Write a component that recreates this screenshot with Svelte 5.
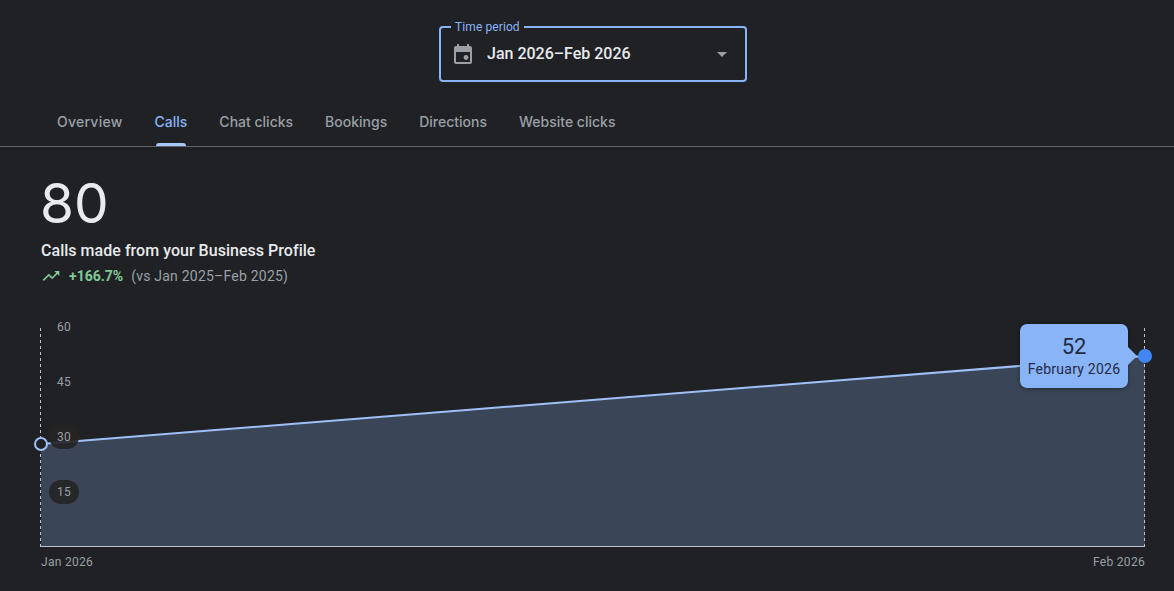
<script>
  const tabs = ['Overview', 'Calls', 'Chat clicks', 'Bookings', 'Directions', 'Website clicks'];
  const active = 'Calls';
  const ticks = [
    { label: '60', y: 327 },
    { label: '45', y: 382 },
    { label: '30', y: 437 },
    { label: '15', y: 492 }
  ];
  // chart canvas starts at y=320 of the page
  const top = 320;
</script>

<div class="page">
  <div class="period">
    <div class="field">
      <span class="legend">Time period</span>
      <svg class="cal" viewBox="0 0 24 24" width="24" height="24">
        <path fill="#9aa0a6" fill-rule="evenodd" d="M19 4h-1V2h-2v2H8V2H6v2H5c-1.1 0-2 .9-2 2v14c0 1.1.9 2 2 2h14c1.1 0 2-.9 2-2V6c0-1.1-.9-2-2-2zM5 10h14v10H5z" />
        <circle cx="15" cy="15.5" r="2.4" fill="#9aa0a6" />
      </svg>
      <span class="value">Jan 2026–Feb 2026</span>
      <span class="caret"></span>
    </div>
  </div>

  <nav class="tabs">
    {#each tabs as tab}
      <div class="tab" class:active={tab === active}>{tab}</div>
    {/each}
  </nav>

  <section class="summary">
    <div class="total">80</div>
    <div class="caption">Calls made from your Business Profile</div>
    <div class="delta">
      <svg viewBox="0 0 24 24" width="20" height="20">
        <path fill="#81c995" d="M16 6l2.29 2.29-4.88 4.88-4-4L2 16.59 3.41 18l6-6 4 4 6.3-6.29L22 12V6z" />
      </svg>
      <span class="pct">+166.7%</span>
      <span class="vs">(vs Jan 2025–Feb 2025)</span>
    </div>
  </section>

  <div class="chart">
    <svg width="1174" height="271" viewBox="0 {top} 1174 271">
      <polygon class="area" points="41,444 1145,356 1145,546 41,546" />
      <line class="line" x1="41" y1="444" x2="1145" y2="356" />
      <line class="guide" x1="40.5" y1="328" x2="40.5" y2="546" />
      <line class="guide" x1="1144.5" y1="328" x2="1144.5" y2="546" />
      <line class="base" x1="40" y1="546.5" x2="1145" y2="546.5" />
      <rect class="pill" x="49" y="425" width="30" height="24" rx="12" />
      <rect class="pill" x="49" y="480" width="30" height="24" rx="12" />
      {#each ticks as t}
        <text class="tick" x="64" y={t.y + 4} text-anchor="middle">{t.label}</text>
      {/each}
      <circle class="start" cx="41" cy="444" r="6" />
      <circle class="end" cx="1145" cy="356" r="7" />
      <text class="axis" x="41" y="566">Jan 2026</text>
      <text class="axis" x="1145" y="566" text-anchor="end">Feb 2026</text>
    </svg>
    <div class="tip">
      <div class="tip-num">52</div>
      <div class="tip-label">February 2026</div>
    </div>
  </div>
</div>

<style>
  :global(body) {
    margin: 0;
    background: #1f2125;
  }

  .page {
    width: 1174px;
    height: 591px;
    overflow: hidden;
    font-family: Roboto, "Liberation Sans", sans-serif;
    color: #e8eaed;
    background: #1f2125;
  }

  .period {
    display: flex;
    justify-content: center;
    padding-top: 26px;
    padding-left: 12px;
  }

  .field {
    position: relative;
    box-sizing: border-box;
    width: 308px;
    height: 56px;
    display: flex;
    align-items: center;
    padding: 0 18px 0 10px;
    border: 2px solid #8ab4f8;
    border-radius: 4px;
  }

  .legend {
    position: absolute;
    top: -9px;
    left: 10px;
    padding: 0 4px;
    background: #1f2125;
    font-size: 12px;
    line-height: 16px;
    letter-spacing: 0.1px;
    color: #8ab4f8;
  }

  .cal {
    flex: none;
    margin-right: 12px;
  }

  .value {
    flex: 1;
    padding-bottom: 1px;
    font-size: 16px;
    font-weight: 500;
    color: #e8eaed;
  }

  .caret {
    width: 0;
    height: 0;
    border-left: 5px solid transparent;
    border-right: 5px solid transparent;
    border-top: 5px solid #9aa0a6;
  }

  .tabs {
    display: flex;
    gap: 32px;
    box-sizing: border-box;
    height: 46px;
    margin-top: 19px;
    padding-left: 57px;
    border-bottom: 1px solid #5f6368;
  }

  .tab {
    position: relative;
    padding-top: 11px;
    font-family: Inter, Roboto, sans-serif;
    font-size: 14px;
    line-height: 20px;
    font-weight: 500;
    color: #9aa0a6;
  }

  .tab:first-child {
    letter-spacing: 0.25px;
  }

  .tab.active {
    color: #8ab4f8;
  }

  .tab.active::after {
    content: '';
    position: absolute;
    left: 1px;
    right: 1px;
    top: 42px;
    height: 3px;
    background: #a8c7fa;
    border-radius: 3px 3px 0 0;
  }

  .summary {
    padding: 26px 0 0 40px;
  }

  .total {
    font-family: Inter, Roboto, sans-serif;
    font-size: 55px;
    line-height: 60px;
    font-weight: 400;
    color: #e8eaed;
  }

  .caption {
    margin-top: 6px;
    padding-left: 1px;
    font-size: 16px;
    line-height: 24px;
    font-weight: 500;
    letter-spacing: 0.03px;
    color: #e8eaed;
  }

  .delta {
    display: flex;
    align-items: center;
    height: 20px;
    margin-top: 3px;
    padding-left: 1px;
    font-size: 14px;
  }

  .delta svg {
    margin-right: 8px;
  }

  .pct {
    font-weight: 700;
    font-size: 14px;
    color: #81c995;
    margin-right: 8px;
  }

  .vs {
    letter-spacing: 0.22px;
    color: #9aa0a6;
  }

  .chart {
    position: relative;
    margin-top: 34px;
    height: 271px;
  }

  .chart svg {
    display: block;
  }

  .area {
    fill: #3a4557;
  }

  .line {
    stroke: #9fc0f7;
    stroke-width: 2;
  }

  .guide {
    stroke: #bdc1c6;
    stroke-width: 1;
    stroke-dasharray: 3 3;
  }

  .base {
    stroke: #bdc1c6;
    stroke-width: 1;
  }

  .pill {
    fill: rgba(36, 36, 36, 0.9);
  }

  .tick,
  .axis {
    font-size: 12px;
    letter-spacing: 0.3px;
    fill: #9aa0a6;
  }

  .start {
    fill: #1f2125;
    stroke: #9fc0f7;
    stroke-width: 2;
  }

  .end {
    fill: #4285f4;
  }

  .tip {
    position: absolute;
    left: 1020px;
    top: 4px;
    box-sizing: border-box;
    width: 108px;
    height: 64px;
    padding-top: 10px;
    text-align: center;
    background: #8ab4f8;
    border-radius: 7px;
    box-shadow: 0 1px 4px rgba(0, 0, 0, 0.4);
    color: #1f2a44;
  }

  .tip::after {
    content: '';
    position: absolute;
    left: 100%;
    top: 23px;
    border-left: 9px solid #8ab4f8;
    border-top: 9px solid transparent;
    border-bottom: 9px solid transparent;
  }

  .tip-num {
    font-size: 22px;
    line-height: 26px;
  }

  .tip-label {
    font-size: 14px;
    line-height: 19px;
    letter-spacing: 0.25px;
  }
</style>
